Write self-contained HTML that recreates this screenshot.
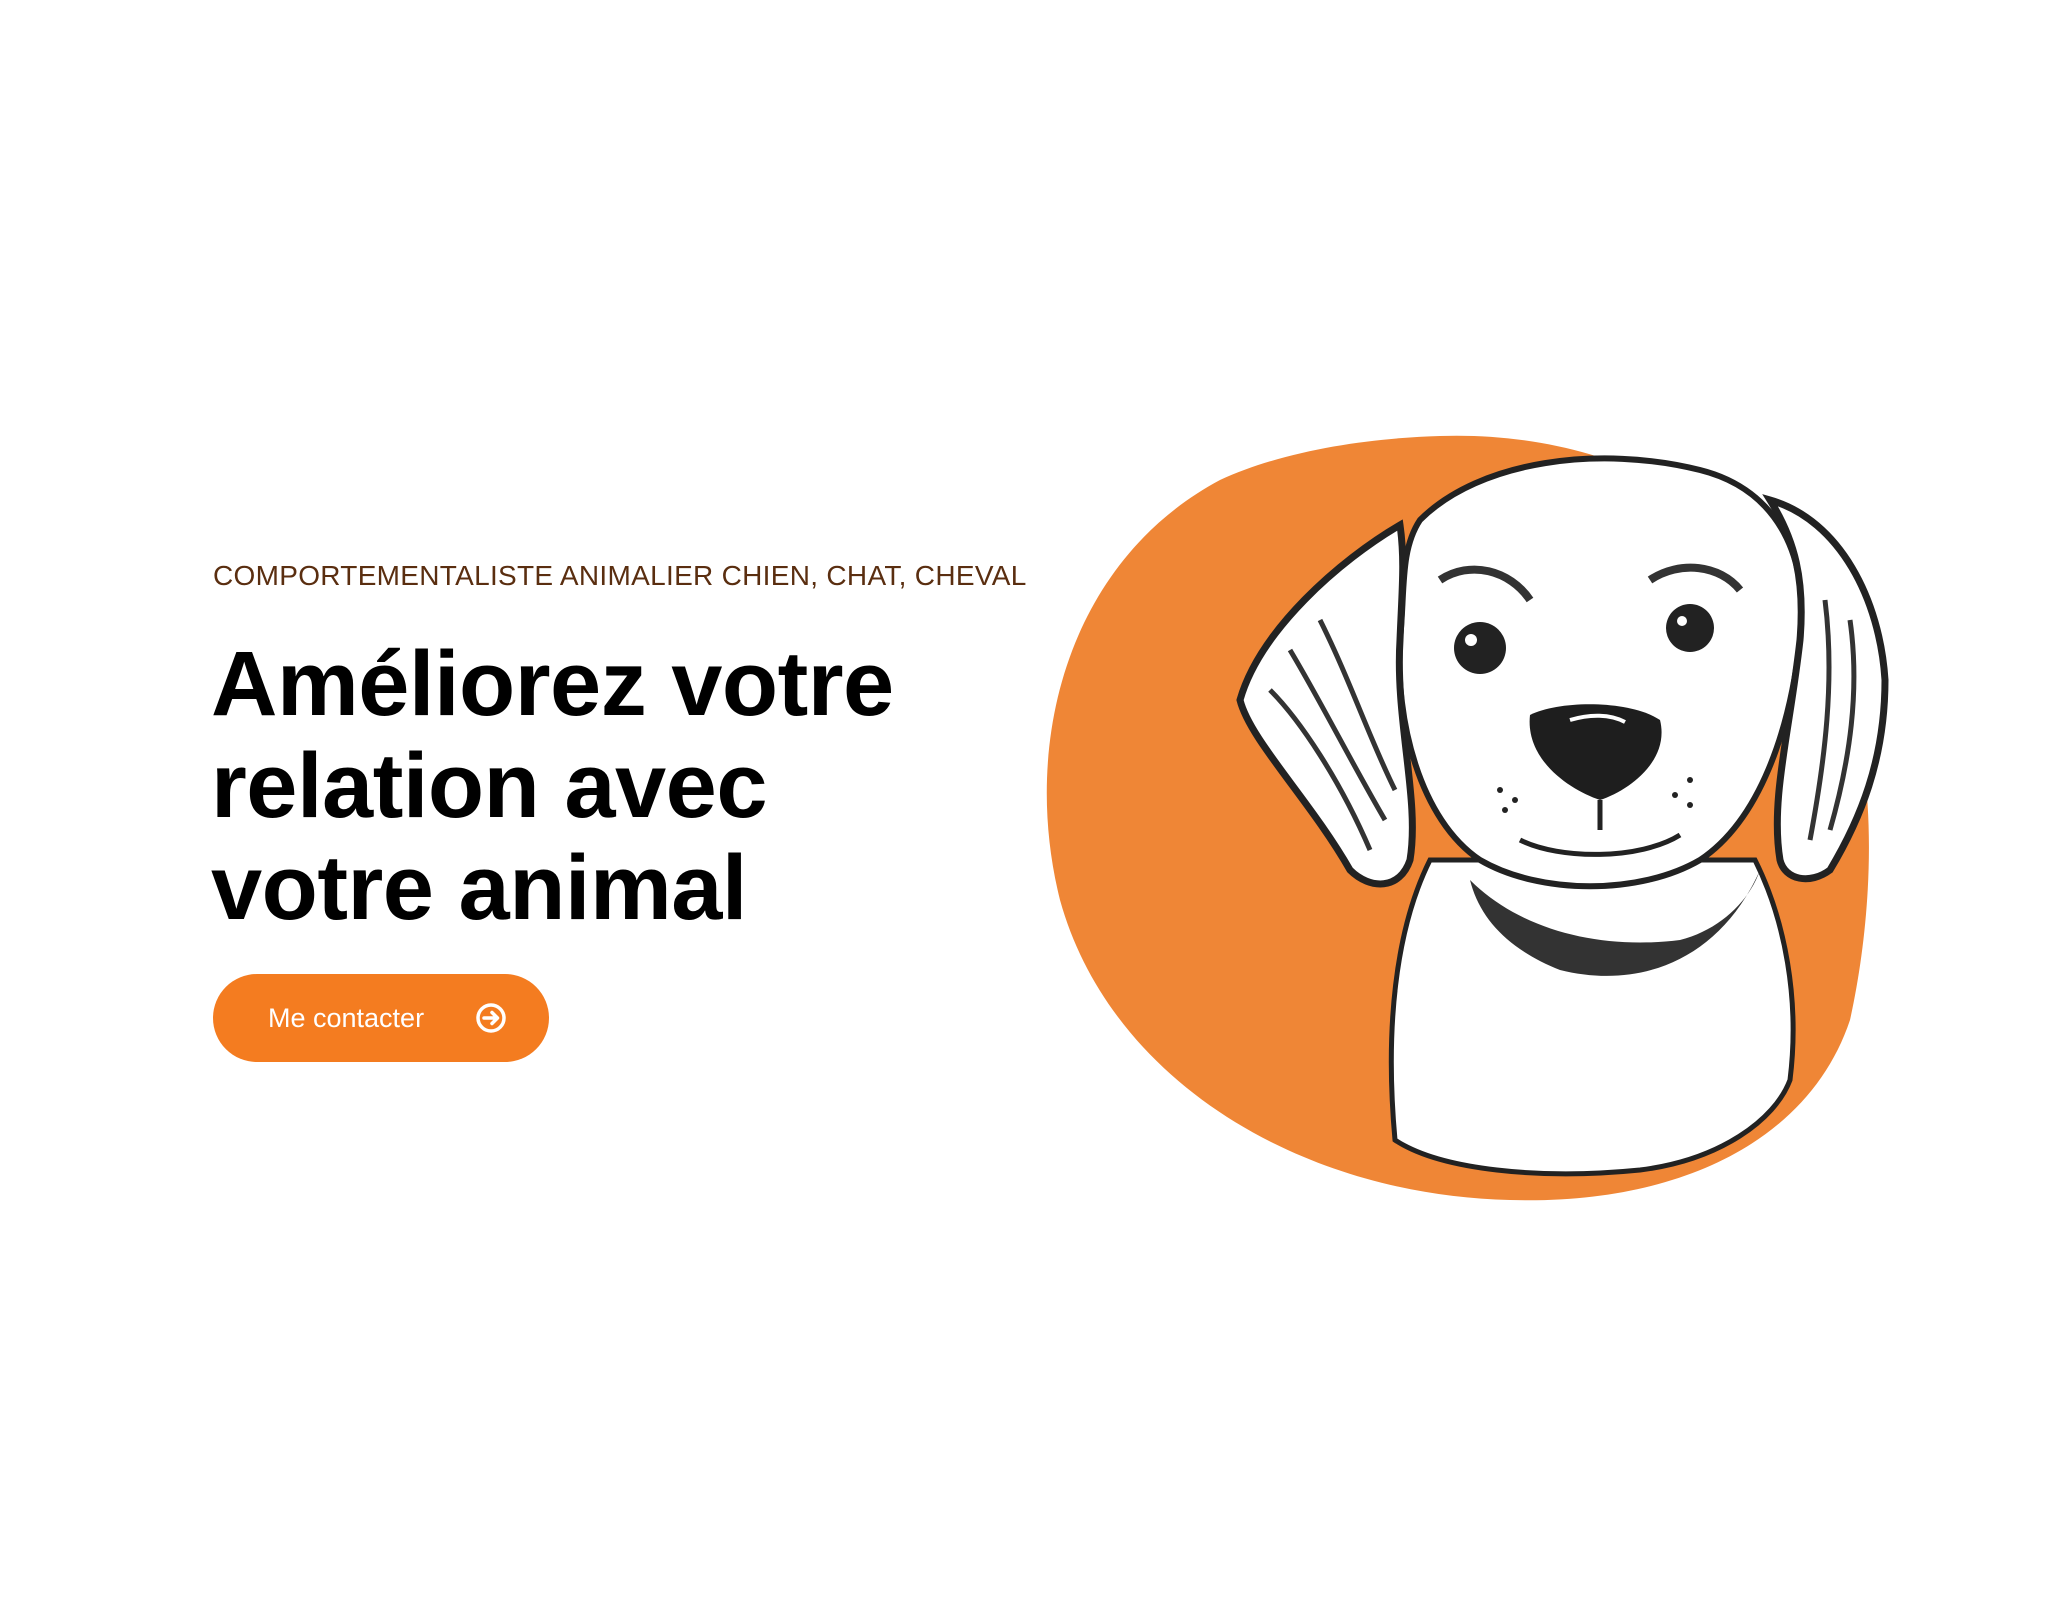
<!DOCTYPE html>
<html><head><meta charset="utf-8"><style>
html,body{margin:0;padding:0;background:#fff;width:2060px;height:1600px;overflow:hidden;font-family:"Liberation Sans",sans-serif}
.sub{position:absolute;left:213px;top:560px;font-size:28px;color:#5a2e10;white-space:nowrap;letter-spacing:0.3px}
h1{position:absolute;left:211px;top:633px;margin:0;font-size:92px;line-height:102px;font-weight:bold;color:#000;letter-spacing:-0.5px}
.btn{position:absolute;left:213px;top:974px;width:336px;height:88px;border-radius:44px;background:#f47c20;color:#fff;font-size:27px;box-sizing:border-box;padding-left:55px;line-height:88px}
svg.ic{position:absolute;left:249px;top:15px}
svg.art{position:absolute;left:0;top:0}
</style></head><body>
<svg class="art" width="2060" height="1600" viewBox="0 0 2060 1600">
<path d="M1440 436 C1620 430 1790 520 1850 700 C1880 800 1870 930 1850 1020 C1810 1140 1680 1205 1510 1200 C1300 1195 1110 1080 1060 900 C1020 740 1070 560 1220 480 C1285 450 1370 438 1440 436 Z" fill="#ef8636"/>
<path d="M1430 860 C1395 930 1385 1030 1395 1140 C1440 1170 1540 1180 1640 1170 C1720 1160 1775 1120 1790 1080 C1800 1000 1785 920 1755 860 Z" fill="#fff" stroke="#222" stroke-width="5"/>
<path d="M1470 880 C1520 930 1600 950 1680 940 C1720 930 1750 900 1760 870 C1720 960 1640 990 1560 970 C1510 950 1480 920 1470 880Z" fill="#333"/>
<path d="M1420 520 C1480 460 1600 445 1700 470 C1780 490 1810 560 1800 640 C1790 730 1760 820 1700 860 C1640 895 1540 895 1480 860 C1420 820 1395 720 1400 640 C1405 590 1400 550 1420 520Z" fill="#fff" stroke="#222" stroke-width="6"/>
<path d="M1400 525 C1340 560 1260 630 1240 700 C1250 740 1310 800 1350 870 C1370 890 1400 890 1410 860 C1420 800 1395 720 1400 640 C1402 590 1405 560 1400 525Z" fill="#fff" stroke="#222" stroke-width="7"/>
<path d="M1270 690 C1300 720 1340 780 1370 850 M1290 650 C1320 700 1350 760 1385 820 M1320 620 C1350 680 1370 740 1395 790" stroke="#333" stroke-width="5" fill="none"/>
<path d="M1770 500 C1840 520 1880 600 1885 680 C1885 760 1860 820 1830 870 C1810 885 1785 880 1780 860 C1770 800 1790 730 1800 640 C1805 580 1795 540 1770 500Z" fill="#fff" stroke="#222" stroke-width="7"/>
<path d="M1850 620 C1860 690 1850 760 1830 830 M1825 600 C1835 680 1825 760 1810 840" stroke="#333" stroke-width="5" fill="none"/>
<path d="M1440 580 C1470 560 1510 570 1530 600" stroke="#333" stroke-width="8" fill="none"/>
<path d="M1650 580 C1680 560 1720 565 1740 590" stroke="#333" stroke-width="8" fill="none"/>
<circle cx="1480" cy="648" r="26" fill="#222"/><circle cx="1471" cy="640" r="6" fill="#fff"/>
<circle cx="1690" cy="628" r="24" fill="#222"/><circle cx="1682" cy="621" r="5" fill="#fff"/>
<path d="M1530 715 C1560 700 1630 700 1660 720 C1670 760 1630 790 1600 800 C1570 790 1525 760 1530 715Z" fill="#1e1e1e"/>
<path d="M1570 720 C1590 714 1610 714 1625 722" stroke="#fff" stroke-width="4" fill="none"/>
<path d="M1600 800 L1600 830 M1520 840 C1560 860 1640 860 1680 835" stroke="#222" stroke-width="5" fill="none"/>
<g fill="#222"><circle cx="1500" cy="790" r="3"/><circle cx="1515" cy="800" r="3"/><circle cx="1505" cy="810" r="3"/><circle cx="1690" cy="780" r="3"/><circle cx="1675" cy="795" r="3"/><circle cx="1690" cy="805" r="3"/></g>
</svg>
<div class="sub">COMPORTEMENTALISTE ANIMALIER CHIEN, CHAT, CHEVAL</div>
<h1>Améliorez votre<br>relation avec<br>votre animal</h1>
<div class="btn">Me contacter<svg class="ic" width="58" height="58" viewBox="0 0 58 58"><circle cx="29" cy="29" r="13" fill="none" stroke="#fff" stroke-width="3.5"/><path d="M22 29 H35 M30 23.5 L35.5 29 L30 34.5" fill="none" stroke="#fff" stroke-width="3.5" stroke-linecap="round" stroke-linejoin="round"/></svg></div>
</body></html>
